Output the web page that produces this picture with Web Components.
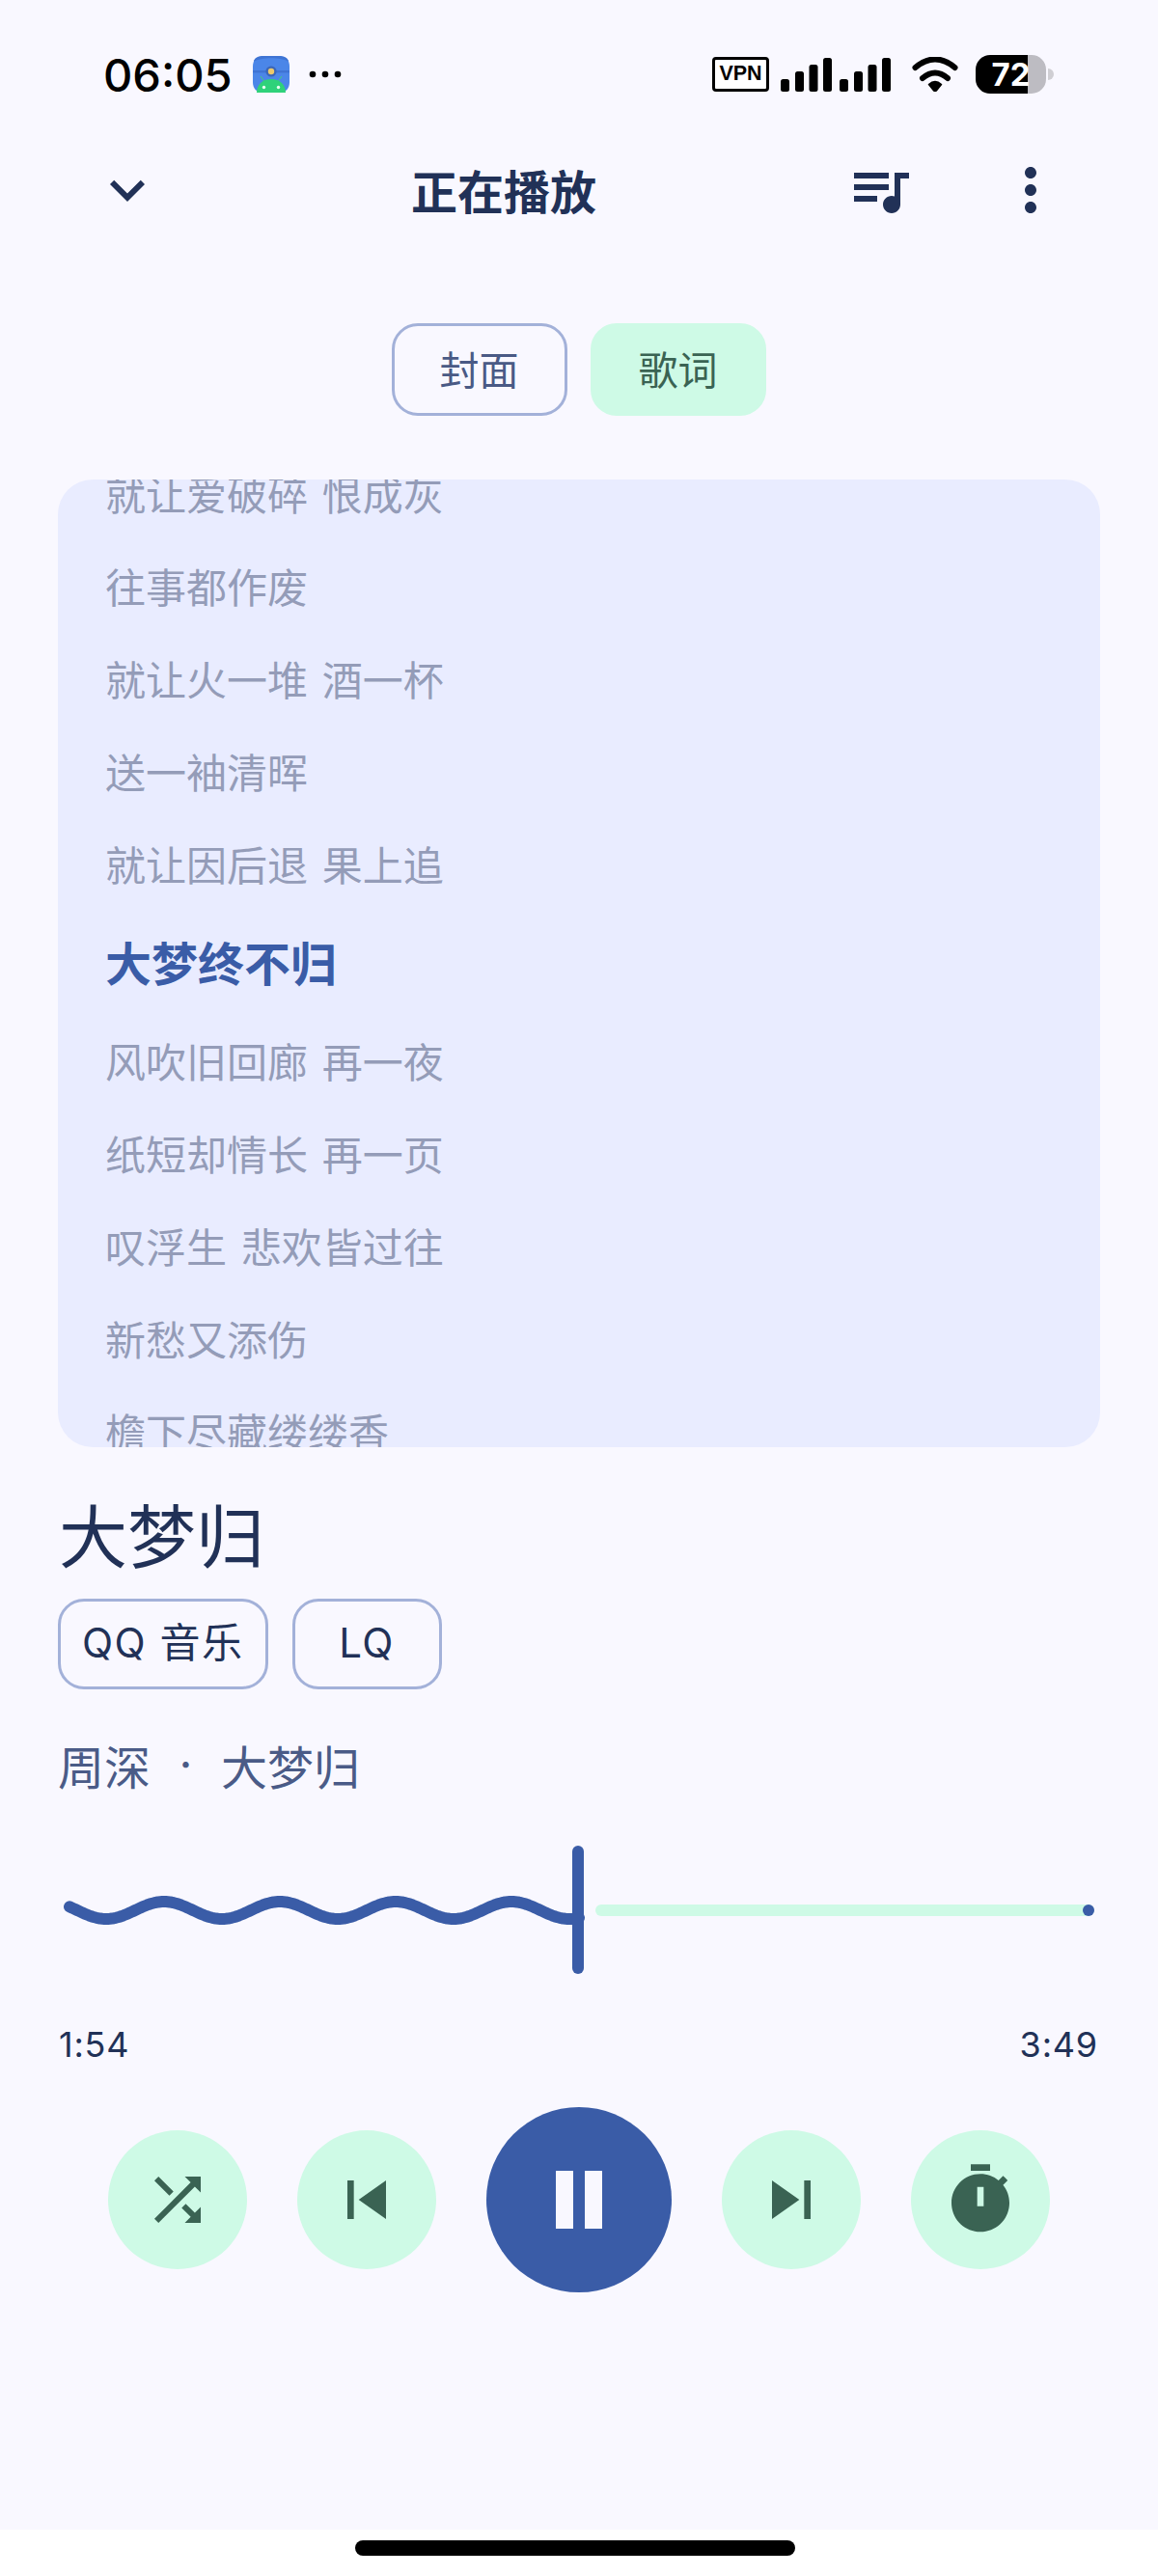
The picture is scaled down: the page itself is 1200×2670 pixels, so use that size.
<!DOCTYPE html>
<html lang="zh-CN">
<head>
<meta charset="utf-8">
<title>正在播放</title>
<style>
  html, body { margin: 0; padding: 0; background: #fff; }
  body { width: 1200px; height: 2670px; overflow: hidden; font-family: Inter, "Noto Sans CJK SC", sans-serif; color: #213157; }
</style>
</head>
<body>
<player-page></player-page>
<script>
const FONT = 'Inter, "Noto Sans CJK SC", sans-serif';

function def(name, html, init) {
  customElements.define(name, class extends HTMLElement {
    constructor() {
      super();
      const r = this.attachShadow({ mode: 'open' });
      r.innerHTML = html;
      if (init) init(r, this);
    }
  });
}

def('status-bar', `
<style>
  :host { display: flex; height: 154px; align-items: center; box-sizing: border-box; padding: 0 108px 0 107px; color: #000; }
  .time { font: 500 47px/1 Inter, sans-serif; width: 131px; white-space: nowrap; margin-right: 24px; }
  .app { display: block; width: 38px; height: 38px; margin-right: 20px; }
  .more { display: block; width: 36px; height: 10px; }
  .right { margin-left: auto; display: flex; align-items: center; }
  .vpn { box-sizing: border-box; width: 59px; height: 36px; border: 3px solid #000; border-radius: 4px; display: flex; align-items: center; justify-content: center; font: 700 21.5px/1 "Liberation Sans", sans-serif; margin-right: 12px; background: #fff; }
  .signal { display: block; width: 114px; height: 36px; margin-right: 22px; }
  .wifi { display: block; width: 48px; height: 36px; margin-right: 18px; }
  .batt { display: flex; align-items: center; }
  .cell { width: 73px; height: 40px; border-radius: 15px; background: linear-gradient(90deg, #000 0 54px, #bdbcc2 54px); color: #fff; font: 700 33px/40px Inter, sans-serif; text-align: center; }
  .tip { width: 6px; height: 12px; margin-left: 2px; background: #cfced3; border-radius: 0 6px 6px 0; }
</style>
<span class="time">06:05</span>
<svg class="app" viewBox="0 0 38 38">
  <path d="M11 0h16c7 0 11 4 11 11v16c0 7-4 11-11 11H11C4 38 0 34 0 27V11C0 4 4 0 11 0z" fill="#4b86e8"/>
  <path d="M1 6C8 1 30 1 37 6 37 2 32 0 27 0H11C6 0 1 2 1 6z" fill="#3f74d4"/>
  <rect x="0" y="15" width="38" height="2.4" fill="#3f74d4"/>
  <circle cx="19" cy="16" r="5.6" fill="#3b66b8"/>
  <circle cx="19" cy="16" r="3.2" fill="#ecc96b"/>
  <path d="M8 21l3.6 5M30 21l-3.6 5" stroke="#3ecf7c" stroke-width="1" fill="none"/>
  <path d="M4 38c0-8 6-14 15-14s15 6 15 14z" fill="#2fd27a"/>
  <circle cx="11.500" cy="32.500" r="1.700" fill="#e9fff2"/>
  <circle cx="26.500" cy="32.500" r="1.700" fill="#e9fff2"/>
</svg>
<svg class="more" viewBox="0 0 36 10"><circle cx="4" cy="5" r="3.300"/><circle cx="17" cy="5" r="3.300"/><circle cx="30" cy="5" r="3.300"/></svg>
<div class="right">
  <span class="vpn">VPN</span>
  <svg class="signal" viewBox="0 0 114 36">
    <rect x="0" y="23" width="9" height="13" rx="2.500"/><rect x="15" y="15" width="9" height="21" rx="2.500"/><rect x="29.500" y="8" width="9" height="28" rx="2.500"/><rect x="44" y="1" width="9" height="35" rx="2.500"/>
    <rect x="61" y="23" width="9" height="13" rx="2.500"/><rect x="76" y="15" width="9" height="21" rx="2.500"/><rect x="90.500" y="8" width="9" height="28" rx="2.500"/><rect x="105" y="1" width="9" height="35" rx="2.500"/>
  </svg>
  <svg class="wifi" viewBox="0 0 48 36">
    <path d="M3.500 11Q24-6 44.500 11M11 22Q24 11 37 22" fill="none" stroke="#000" stroke-width="6" stroke-linecap="round"/>
    <path d="M17.500 28.500Q24 22.500 30.500 28.500L25.500 34.800Q24 36 22.500 34.800z" stroke="#000" stroke-width="1.500" stroke-linejoin="round"/>
  </svg>
  <div class="batt"><div class="cell">72</div><div class="tip"></div></div>
</div>`);

def('top-bar', `
<style>
  :host { display: flex; height: 86px; align-items: center; box-sizing: border-box; padding: 0 96px; color: #213157; }
  svg { display: block; width: 72px; height: 72px; fill: currentColor; flex: none; }
  h1 { margin: 0 0 0 258px; padding-bottom: 3px; font: 700 48px/72px "Noto Sans CJK SC", sans-serif; width: 192px; text-align: center; white-space: nowrap; }
  .q { margin-left: auto; margin-right: 84px; }
</style>
<svg viewBox="0 0 24 24"><path d="M16.590 8.590L12 13.170 7.410 8.590 6 10l6 6 6-6z"/></svg>
<h1>正在播放</h1>
<svg class="q" viewBox="0 0 24 24"><path d="M15 6H3v2h12V6zm0 4H3v2h12v-2zM3 16h8v-2H3v2zM17 6v8.180c-.31-.11-.65-.18-1-.18-1.660 0-3 1.340-3 3s1.340 3 3 3 3-1.340 3-3V8h3V6h-5z"/></svg>
<svg viewBox="0 0 24 24"><path d="M12 8c1.100 0 2-.9 2-2s-.9-2-2-2-2 .9-2 2 .9 2 2 2zm0 2c-1.100 0-2 .9-2 2s.9 2 2 2 2-.9 2-2-.9-2-2-2zm0 6c-1.100 0-2 .9-2 2s.9 2 2 2 2-.9 2-2-.9-2-2-2z"/></svg>`);

def('tab-row', `
<style>
  :host { display: flex; justify-content: center; gap: 24px; margin-top: 95px; }
</style>
<slot></slot>`);

def('tab-chip', `
<style>
  :host { display: flex; box-sizing: border-box; width: 182px; height: 96px; padding: 0 1px 3px 0; align-items: center; justify-content: center; border-radius: 27px; font: 400 41px/1 "Noto Sans CJK SC", sans-serif; border: 3px solid #a3b1d9; color: #4a5a85; }
  :host([on]) { background: #cefae6; border-color: #cefae6; color: #3a6353; }
</style>
<slot></slot>`);

def('lyrics-panel', `
<style>
  :host { display: block; box-sizing: border-box; margin: 66px 60px 0; height: 1003px; background: #e9ecff; border-radius: 36px; overflow: hidden; }
  .list { margin-top: -31px; padding-left: 49px; }
</style>
<div class="list"><slot></slot></div>`);

def('lyric-line', `
<style>
  :host { display: block; height: 96px; font: 400 42px/96px ${FONT}; word-spacing: 3px; color: #949cb8; white-space: nowrap; }
  :host([now]) { height: 108px; font: 700 48px/107px ${FONT}; color: #3a5ca7; }
</style>
<slot></slot>`);

def('song-info', `
<style>
  :host { display: block; margin: 0 60px; color: #213157; }
  h2 { margin: 38px 0 19px 1px; font: 400 71px/100px "Noto Sans CJK SC", sans-serif; }
  .chips { display: flex; gap: 25px; }
  .artist { display: flex; margin-top: 43px; font: 400 48px/70px "Noto Sans CJK SC", sans-serif; color: #4a5b87; }
  .dot { width: 73px; text-align: center; font-family: Inter, sans-serif; font-weight: 400; }
</style>
<h2>大梦归</h2>
<div class="chips"><slot name="chip"></slot></div>
<div class="artist"><span>周深</span><span class="dot">·</span><span>大梦归</span></div>`);

def('info-chip', `
<style>
  :host { display: flex; box-sizing: border-box; min-width: 155px; height: 94px; padding: 0 22px 2px; align-items: center; justify-content: center; border: 3px solid #a3b1d9; border-radius: 27px; font: 400 42px/1 ${FONT}; letter-spacing: 1.5px; color: #213157; white-space: nowrap; }
</style>
<slot></slot>`);

def('wave-progress', `
<style>
  :host { display: block; margin: 46px 60px 0; height: 140px; }
  svg { display: block; width: 1080px; height: 140px; }
</style>
<svg viewBox="60 1910 1080 140">
  <path id="w" fill="none" stroke="#3a5ca7" stroke-width="12" stroke-linecap="round" stroke-linejoin="round"/>
  <rect x="593" y="1913" width="12" height="133" rx="6" fill="#3a5ca7"/>
  <rect x="617" y="1974" width="517" height="12" rx="6" fill="#cefae6"/>
  <circle cx="1128" cy="1980" r="6" fill="#3a5ca7"/>
</svg>`, r => {
  let d = '';
  for (let x = 72; x <= 600; x += 2) {
    const y = 1980 + 9 * Math.cos(2 * Math.PI * (x - 110) / 120);
    d += (d ? 'L' : 'M') + x + ' ' + y.toFixed(2);
  }
  r.getElementById('w').setAttribute('d', d);
});

def('time-row', `
<style>
  :host { display: flex; justify-content: space-between; margin: 49px 62px 0 61px; height: 40px; font: 400 36px/40px Inter, sans-serif; color: #213157; letter-spacing: .8px; }
</style>
<slot></slot>`);

def('player-controls', `
<style>
  :host { display: flex; justify-content: center; align-items: center; gap: 52px; margin-top: 45px; height: 192px; }
</style>
<slot></slot>`);

def('round-button', `
<style>
  :host { display: flex; width: 144px; height: 144px; border-radius: 50%; background: #cefae6; color: #3a6353; align-items: center; justify-content: center; flex: none; }
  :host([big]) { width: 192px; height: 192px; background: #3a5ca7; color: #f9f8ff; }
</style>
<slot></slot>`);

def('icon-glyph', `
<style>
  :host { display: block; line-height: 0; }
  svg { display: block; fill: currentColor; }
</style>
<svg></svg>`, (r, el) => {
  const s = r.querySelector('svg');
  const paths = {
    shuffle: [72, 'M10.590 9.170L5.410 4 4 5.410l5.170 5.170 1.420-1.410zM14.500 4l2.040 2.040L4 18.590 5.410 20 17.960 7.460 20 9.500V4h-5.500zm.33 9.410l-1.410 1.410 3.130 3.130L14.500 20H20v-5.500l-2.040 2.040-3.130-3.130z'],
    prev: [80, 'M6 6h2v12H6zm3.500 6l8.500 6V6z'],
    next: [80, 'M6 18l8.500-6L6 6v12zM16 6v12h2V6h-2z'],
    timer: [80, 'M15 1H9v2h6V1zM11 14h2V8h-2v6zm8.030-6.610l1.420-1.420c-.43-.51-.9-.99-1.410-1.410l-1.420 1.420C16.070 4.740 14.120 4 12 4c-4.970 0-9 4.030-9 9s4.020 9 9 9 9-4.030 9-9c0-2.120-.74-4.070-1.970-5.610z'],
    pause: [96, 'M6 4.500h4.500v15H6zM13.500 4.500H18v15h-4.500z']
  };
  const p = paths[el.getAttribute('name')] || paths.prev;
  s.setAttribute('viewBox', '0 0 24 24');
  s.setAttribute('width', p[0]);
  s.setAttribute('height', p[0]);
  s.innerHTML = '<path fill-rule="evenodd" d="' + p[1] + '"/>';
});

def('home-bar', `
<style>
  :host { display: flex; justify-content: flex-start; box-sizing: border-box; height: 48px; padding: 11px 0 0 368px; background: #fff; }
  i { display: block; width: 456px; height: 16px; border-radius: 8px; background: #000; }
</style>
<i></i>`);

def('player-page', `
<style>
  :host { display: flex; flex-direction: column; width: 1200px; height: 2670px; }
  .screen { flex: 1; background: #f9f8ff; }
</style>
<div class="screen">
  <status-bar></status-bar>
  <top-bar></top-bar>
  <tab-row><tab-chip>封面</tab-chip><tab-chip on>歌词</tab-chip></tab-row>
  <lyrics-panel>
    <lyric-line>就让爱破碎 恨成灰</lyric-line>
    <lyric-line>往事都作废</lyric-line>
    <lyric-line>就让火一堆 酒一杯</lyric-line>
    <lyric-line>送一袖清晖</lyric-line>
    <lyric-line>就让因后退 果上追</lyric-line>
    <lyric-line now>大梦终不归</lyric-line>
    <lyric-line>风吹旧回廊 再一夜</lyric-line>
    <lyric-line>纸短却情长 再一页</lyric-line>
    <lyric-line>叹浮生 悲欢皆过往</lyric-line>
    <lyric-line>新愁又添伤</lyric-line>
    <lyric-line>檐下尽藏缕缕香</lyric-line>
  </lyrics-panel>
  <song-info>
    <info-chip slot="chip">QQ 音乐</info-chip>
    <info-chip slot="chip">LQ</info-chip>
  </song-info>
  <wave-progress></wave-progress>
  <time-row><span>1:54</span><span>3:49</span></time-row>
  <player-controls>
    <round-button><icon-glyph name="shuffle"></icon-glyph></round-button>
    <round-button><icon-glyph name="prev"></icon-glyph></round-button>
    <round-button big><icon-glyph name="pause"></icon-glyph></round-button>
    <round-button><icon-glyph name="next"></icon-glyph></round-button>
    <round-button><icon-glyph name="timer"></icon-glyph></round-button>
  </player-controls>
</div>
<home-bar></home-bar>`);
</script>
</body>
</html>
